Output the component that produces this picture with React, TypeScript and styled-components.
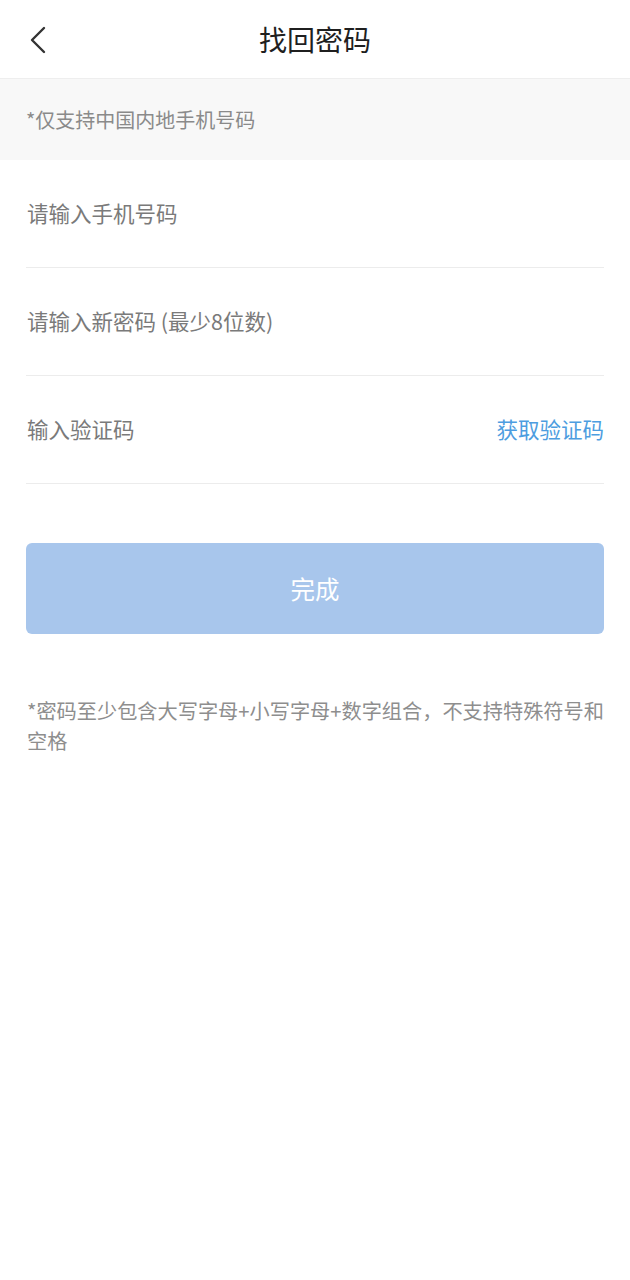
import React from "react";
import styled, { createGlobalStyle } from "styled-components";

const GlobalStyle = createGlobalStyle`
  html, body {
    margin: 0;
    padding: 0;
    background: #ffffff;
  }
  body {
    font-family: "Noto Sans CJK SC", "Noto Sans", sans-serif;
  }
`;

const Page = styled.div`
  width: 630px;
  min-height: 1280px;
  background: #ffffff;
  display: flex;
  flex-direction: column;
`;

const Header = styled.header`
  height: 78px;
  display: flex;
  align-items: center;
  justify-content: center;
  position: relative;
  border-bottom: 1px solid #eeeeee;
`;

const BackButton = styled.button`
  position: absolute;
  left: 20px;
  top: 20px;
  width: 36px;
  height: 40px;
  padding: 0;
  border: none;
  background: transparent;
  display: flex;
  align-items: center;
  justify-content: center;
`;

const Title = styled.h1`
  margin: 0;
  font-size: 28px;
  font-weight: 400;
  color: #1f1f1f;
  line-height: 1;
`;

const Notice = styled.div`
  height: 81px;
  background: #f8f8f8;
  display: flex;
  align-items: center;
  padding-left: 26px;
  font-size: 20px;
  color: #8a8a8a;
`;

const Form = styled.div`
  display: flex;
  flex-direction: column;
  padding: 0 26px;
`;

const Row = styled.div`
  height: 107px;
  display: flex;
  align-items: center;
  justify-content: space-between;
  border-bottom: 1px solid #ececec;
`;

const Placeholder = styled.span`
  font-size: 21.5px;
  color: #7a7a7a;
  padding-left: 1px;
  padding-bottom: 3px;
`;

const LinkText = styled.span`
  font-size: 21.5px;
  color: #4d9de0;
  padding-bottom: 3px;
`;

const SubmitButton = styled.button`
  margin: 59px 26px 0;
  height: 91px;
  border: none;
  border-radius: 6px;
  background: #a8c6ec;
  color: #ffffff;
  font-family: inherit;
  font-size: 24.5px;
  display: flex;
  align-items: center;
  justify-content: center;
`;

const Hint = styled.p`
  margin: 62px 26px 0 27px;
  font-size: 20.2px;
  line-height: 30px;
  color: #8e8e8e;
`;

export default function App() {
  return (
    <>
      <GlobalStyle />
      <Page>
        <Header>
          <BackButton aria-label="返回">
            <svg width="22" height="28" viewBox="0 0 22 28" fill="none">
              <path d="M17 2 L5 14 L17 26" stroke="#333" strokeWidth="2.4" strokeLinecap="round" strokeLinejoin="round" />
            </svg>
          </BackButton>
          <Title>找回密码</Title>
        </Header>
        <Notice>*仅支持中国内地手机号码</Notice>
        <Form>
          <Row>
            <Placeholder>请输入手机号码</Placeholder>
          </Row>
          <Row>
            <Placeholder>请输入新密码 (最少8位数)</Placeholder>
          </Row>
          <Row>
            <Placeholder>输入验证码</Placeholder>
            <LinkText>获取验证码</LinkText>
          </Row>
        </Form>
        <SubmitButton>完成</SubmitButton>
        <Hint>*密码至少包含大写字母+小写字母+数字组合，不支持特殊符号和空格</Hint>
      </Page>
    </>
  );
}
